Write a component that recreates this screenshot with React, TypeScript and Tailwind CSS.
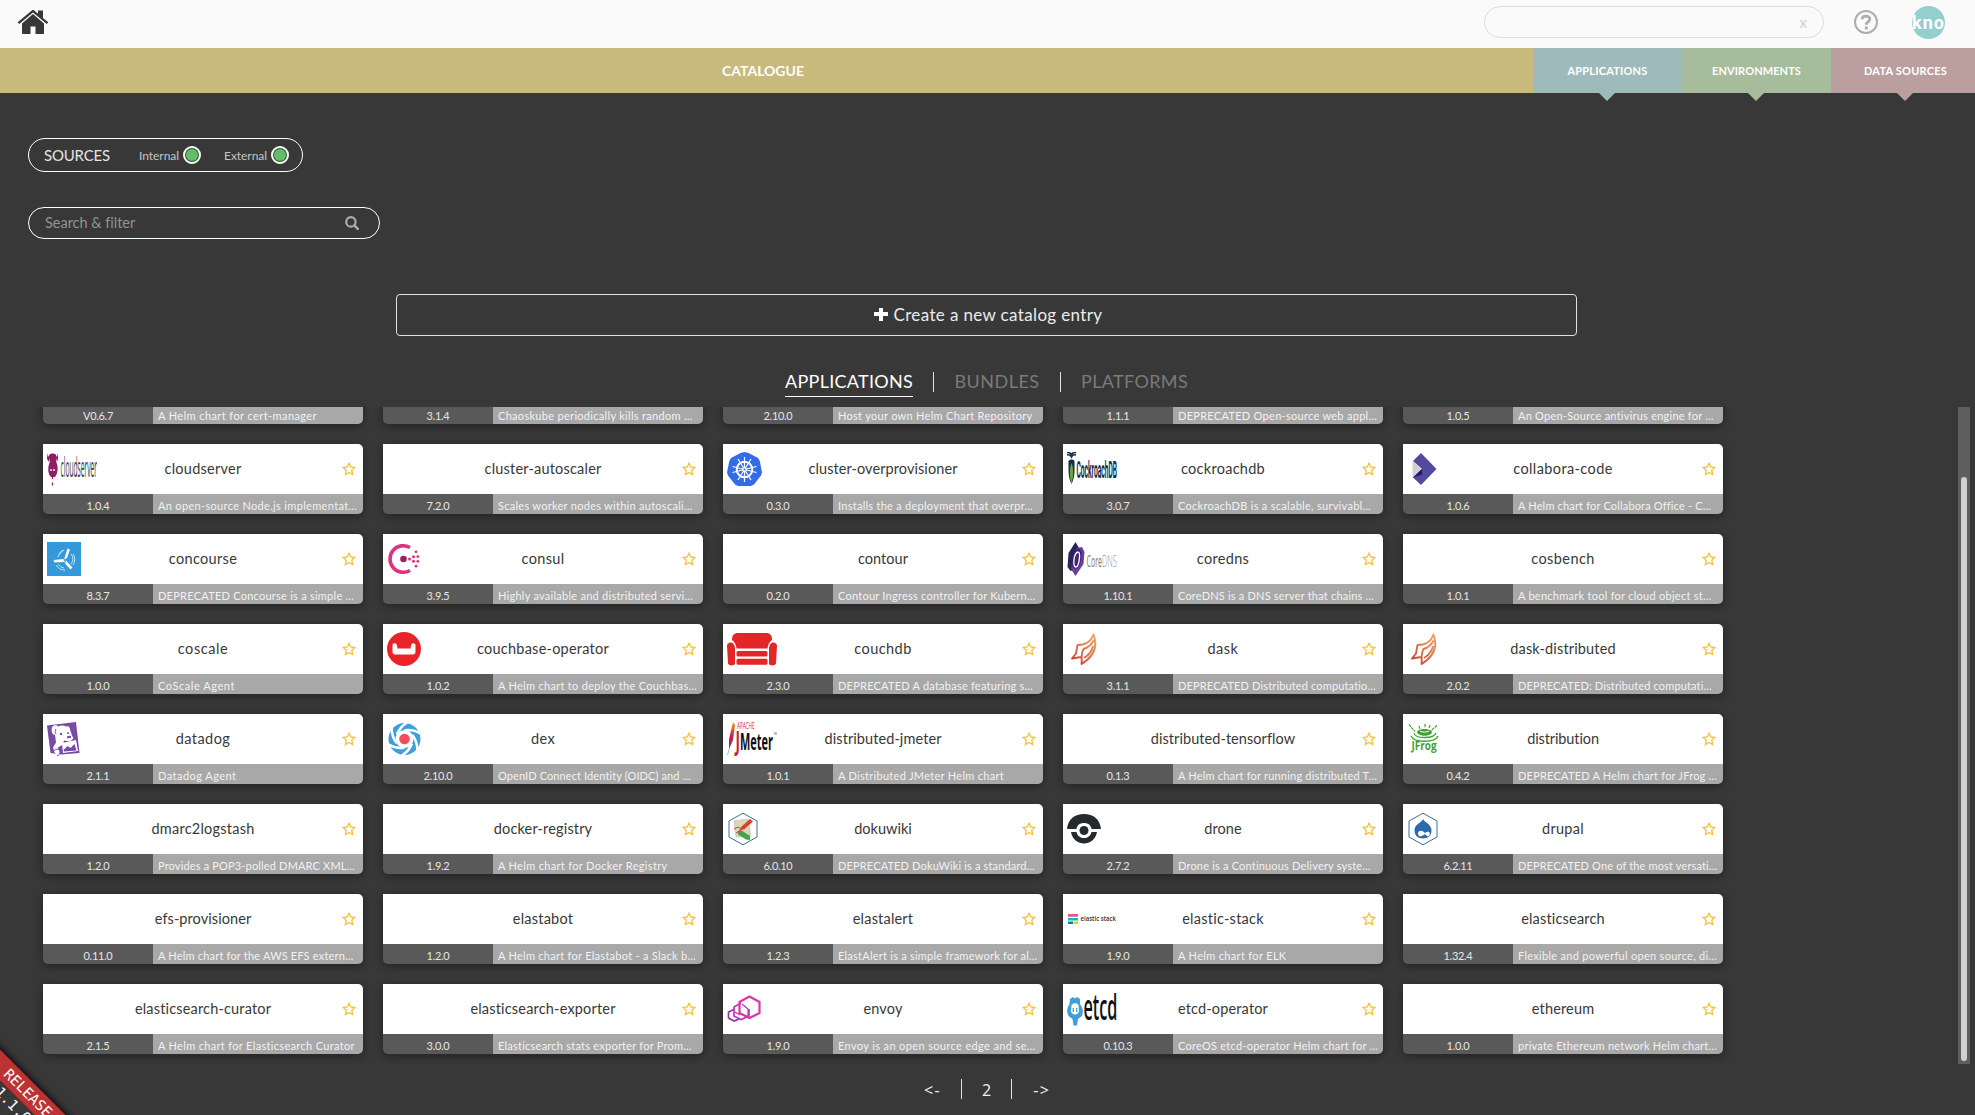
import { useLayoutEffect, useRef, useState } from 'react';
import type { ReactNode } from 'react';

/** Text whose tracking is adjusted so that the line takes the given width. */
function Fit({ text, w, className = '' }: { text: string; w: number; className?: string }) {
  const ref = useRef<HTMLSpanElement>(null);
  const [spacing, setSpacing] = useState(0);
  useLayoutEffect(() => {
    if (ref.current) {
      const natural = ref.current.getBoundingClientRect().width;
      setSpacing((w - natural) / text.length);
    }
  }, [text, w]);
  return (
    <span ref={ref} className={`inline-block whitespace-pre ${className}`} style={{ letterSpacing: spacing }}>
      {text}
    </span>
  );
}

const logos: Record<string, ReactNode> = {
  cloudserver: (
    <svg className="h-[34px] w-[50px]" viewBox="0 0 50 34">
      <path d="M0 1v6l2 3 1-4 1-4h4l1 4 1 4 1-3V1l-1 4-2-3H3L1 5z" fill="#8e1f63" />
      <path d="M2.500 3c1-2 5.500-2 6.500 0v6l1.500 5c.6 6-1 9-2.500 11H4C2 23 .8 20 1.500 14L3 9z" fill="#8e1f63" />
      <circle cx="4" cy="18" r=".9" fill="#fff" /><circle cx="7" cy="18" r=".9" fill="#fff" />
      <path d="M5.500 24v3M5.500 30.500v3" stroke="#8e1f63" strokeWidth="1.300" />
      <text x="13.500" y="24.500" fontFamily="Open Sans" fontSize="28" textLength="36.500" lengthAdjust="spacingAndGlyphs" fill="#2f3b50">cloudserver</text>
    </svg>
  ),
  'cluster-overprovisioner': (
    <svg className="h-[34px] w-[35px]" viewBox="0 0 35 34">
      <path d="M17.500 0l4 1 9.500 5 1.800 3L35 20.500l-1 3-7 9-3 1.500H11l-3-1.500-7-9-1-3L2.300 9 4 6l9.500-5z" fill="#326de6" />
      <g stroke="#fff" fill="none" strokeWidth="1.500">
        <circle cx="17.500" cy="17.500" r="7.800" strokeWidth="1.900" />
        <path d="M17.500 5v25M5.500 14.500l24 6M29.500 14.500l-24 6M11 7l13 21M24 7L11 28" strokeWidth="1.200" />
      </g>
      <circle cx="17.500" cy="17.500" r="2.200" fill="#fff" /><circle cx="17.500" cy="17.500" r="1" fill="#326de6" />
    </svg>
  ),
  cockroachdb: (
    <svg className="h-[34px] w-[50px]" viewBox="0 0 50 34">
      <path d="M0 .8c2.500-.8 4 .5 4.500 2.500C5 1.300 6.500 0 9 .8M0 3c2-.8 3.500 0 4.500 2C5.500 3 7 2.200 9 3" stroke="#122c4a" strokeWidth="1.500" fill="none" />
      <path d="M1.500 9c1.500-2 4.500-2 6 0v9c0 6-1 10-3 14-2-4-3-8-3-14z" fill="#122c4a" />
      <path d="M4.500 11c2.500 6 2 14 0 21-2-7-2.500-15 0-21" fill="#5ea93c" />
      <text x="9.500" y="25.500" fontFamily="Roboto" fontWeight="700" fontSize="23" textLength="40.500" lengthAdjust="spacingAndGlyphs" fill="#122c4a">CockroachDB</text>
    </svg>
  ),
  'collabora-code': (
    <svg className="h-[34px] w-[34px]" viewBox="0 0 34 34">
      <path d="M5.500 9v17l9-8.500z" fill="#d0d0d0" />
      <path d="M14 1l15.500 16L14 33l-8-7.500 9-8.500-9-8z" fill="#514a9d" />
      <path d="M6 25.500l9-8.500v5.500z" fill="#2b0f75" />
    </svg>
  ),
  concourse: (
    <svg className="h-[34px] w-[34px]" viewBox="0 0 34 34">
      <rect width="34" height="34" fill="#3498db" />
      <path d="M20.500 6.500l2.500 1-3 8.500-3 1.500zM6.500 18l10-1 1.500 3-10.500.500zM19 18.500l6.500 7-2 2-5.500-6z" fill="#fff" />
      <g stroke="#d4ebfa" fill="none" strokeWidth=".9"><path d="M13 12a8 8 0 014-4M11 15a10 10 0 015-7M11 22a8 8 0 006 4M9 23a10 10 0 009 5M24 12a8 8 0 010 10M26 12a10 10 0 010 11" /></g>
    </svg>
  ),
  consul: (
    <svg className="h-[34px] w-[34px]" viewBox="0 0 34 34">
      <path d="M23 5.500A13.300 13.300 0 1023 28.500" fill="none" stroke="#e0317e" strokeWidth="3.600" />
      <circle cx="16.500" cy="17" r="3.300" fill="#96215c" />
      <g fill="#e0317e"><circle cx="22.500" cy="17" r="1.500" /><circle cx="26.500" cy="14.700" r="1.500" /><circle cx="26.500" cy="19.300" r="1.500" /><circle cx="30.800" cy="14.700" r="1.400" /><circle cx="30.800" cy="19.300" r="1.400" /><circle cx="29" cy="9.800" r="1.400" /><circle cx="29" cy="24.200" r="1.400" /></g>
    </svg>
  ),
  coredns: (
    <svg className="h-[34px] w-[50px]" viewBox="0 0 50 34">
      <path d="M8.500 0l4 7-3 20-6 2-3-4 1-14z" fill="#2b2256" />
      <path d="M9 6l6-1 2.500 5-1 12-8 12-4.500-7z" fill="#6a3f9c" />
      <path d="M9 6l4 1 2 4-2 12-5 4-4-3z" fill="#43257c" />
      <path d="M11.500 10c-5 0-6 15-3 15 4 0 5-14 3-15" stroke="#fff" strokeWidth="1.300" fill="none" />
      <text x="19.500" y="24.500" fontFamily="Open Sans" fontSize="16.500" textLength="15.500" lengthAdjust="spacingAndGlyphs" fill="#7a7a7a">Core</text>
      <text x="35" y="24.500" fontFamily="Open Sans" fontWeight="300" fontSize="16.500" textLength="15" lengthAdjust="spacingAndGlyphs" fill="#9a9a9a">DNS</text>
    </svg>
  ),
  'couchbase-operator': (
    <svg className="h-[34px] w-[34px]" viewBox="0 0 34 34">
      <circle cx="17" cy="17" r="17" fill="#ea2328" />
      <path d="M5.500 13.500c0-3 4-3 4.500 0l.5 3h13l.5-3c.5-3 4.500-3 4.500 0V20c0 1.500-1 2.500-2.500 2.500H8c-1.500 0-2.500-1-2.500-2.500z" fill="#fff" />
    </svg>
  ),
  couchdb: (
    <svg className="h-[34px] w-[50px]" viewBox="0 0 50 34">
      <g fill="#e42528">
        <path d="M5 8c0-5 2-7 6-7h28c4 0 6 2 6 7-3 2-4 5-4.500 8.500h-31C9 13 8 10 5 8z" />
        <rect x="9.500" y="19" width="31" height="5.500" rx="1.500" /><rect x="9.500" y="26.700" width="31" height="6" rx="1.500" />
        <path d="M0 14c0-4 7-6 8 2v16c-1 2-7 2-7-1zM50 14c0-4-7-6-8 2v16c1 2 7 2 7-1z" />
      </g>
    </svg>
  ),
  dask: (
    <svg className="h-[34px] w-[34px]" viewBox="0 0 34 34">
      <defs><linearGradient id="dask" x1="0" y1="1" x2=".8" y2="0"><stop stopColor="#c83c2e" /><stop offset="1" stopColor="#f0a060" /></linearGradient></defs>
      <path d="M14 25l-9 1.500 4-5 1.500-8.500C18 13 24 10 26.500 2.500c5 13-1.500 23-12 29.500 1-5-1.500-9 2-15C23 15 25.500 11 27 8M17 26c5-3 8-7 9-12" fill="none" stroke="url(#dask)" strokeWidth="1.900" strokeLinejoin="round" />
    </svg>
  ),
  datadog: (
    <svg className="h-[34px] w-[34px]" viewBox="0 0 34 34">
      <path d="M0 3.500L29 0l3.500 31-18 1.500L3.500 31z" fill="#774aa4" />
      <path d="M5 5c2-2.500 5-2 6-.5 2.500-1.500 6-1.500 8 0 2-1 4 0 4 3l2 6 1.500 3-3.500 3-6-1-1 4-5 3 1 5-4 1-2-6 3-5-1-8c-3 1-4-4-3-7.500z" fill="#fff" />
      <path d="M15 21l14-3 2 11-15 2z" fill="#fff" />
      <path d="M16.500 28l4-4 3 2 4-4 2 6.500-12.500 1z" fill="#774aa4" />
      <path d="M9 7c-1 2-1 3 0 5" stroke="#774aa4" fill="none" />
      <circle cx="14" cy="12" r="1.200" fill="#774aa4" /><circle cx="21" cy="11" r="1" fill="#774aa4" /><path d="M20 15.500l4-.8" stroke="#774aa4" strokeWidth="2.200" />
      <path d="M7 29c2-3 6-2 6 1 0 2-1 3.500-3 3.500" fill="#fff" stroke="#774aa4" />
    </svg>
  ),
  dex: (
    <svg className="h-[34px] w-[34px]" viewBox="0 0 34 34">
      <circle cx="17.500" cy="17" r="12.500" fill="none" stroke="#3f9fda" strokeWidth="7" />
      <g stroke="#fff" strokeWidth="2.600">
        {[0, 60, 120, 180, 240, 300].map((a) => <path key={a} transform={`rotate(${a} 17.500 17)`} d="M10 12.500C12 7 16 3 21 0" fill="none" />)}
      </g>
      <circle cx="17.500" cy="17" r="5.300" fill="#f24d5f" />
    </svg>
  ),
  'distributed-jmeter': (
    <svg className="h-[34px] w-[50px]" viewBox="0 0 50 34">
      <defs><linearGradient id="quill" x1="0" y1="0" x2="0" y2="1"><stop stopColor="#f6a21c" /><stop offset=".5" stopColor="#cf2640" /><stop offset="1" stopColor="#6b2d84" /></linearGradient></defs>
      <path d="M6 0l2 3-2 15-4 9 0-10z" fill="url(#quill)" /><path d="M2.500 26L.5 33" stroke="#999" strokeWidth=".7" />
      <text x="10" y="7" fontFamily="Open Sans" fontSize="9" textLength="17.500" lengthAdjust="spacingAndGlyphs" fill="#cf2640">APACHE</text>
      <text x="8.500" y="28" fontFamily="Open Sans" fontWeight="700" fontSize="26" textLength="4.500" lengthAdjust="spacingAndGlyphs" fill="#cb2138">J</text>
      <text x="13" y="28" fontFamily="Open Sans" fontWeight="700" fontSize="24" textLength="33" lengthAdjust="spacingAndGlyphs" fill="#111">Meter</text>
      <text x="46.500" y="13" fontFamily="Open Sans" fontSize="4" textLength="3.500" lengthAdjust="spacingAndGlyphs" fill="#444">TM</text>
    </svg>
  ),
  distribution: (
    <svg className="h-[34px] w-[34px]" viewBox="0 0 34 34">
      <g stroke="#43a233" fill="none">
        <path d="M2 2.500l6 7M30 3.500l-6 5M12 4l1 3M18 2v4M23 3l-1 3" strokeWidth="1.200" strokeDasharray="3 .7" />
        <path d="M10 10c1-4 14-4 15 0-1 5-14 5-15 0z" fill="#43a233" stroke="none" />
        <path d="M13 9c2 1.500 7 1.500 9 0" stroke="#fff" />
        <path d="M7 11c1 6 20 6 22 0M4 14c3 7 24 7 27 0" strokeWidth="1.300" />
      </g>
      <text x="4.500" y="28" fontFamily="Open Sans" fontWeight="700" fontSize="13" textLength="25" lengthAdjust="spacingAndGlyphs" fill="#43a233">JFrog</text>
    </svg>
  ),
  dokuwiki: (
    <svg className="h-[34px] w-[34px]" viewBox="0 0 34 34">
      <path d="M16 1.200l14 7.800v16l-14 7.800L2 25V9z" fill="#fff" stroke="#3c6e96" strokeWidth="1" />
      <path d="M7 9l14-2 3 17-15 1z" fill="#ddd6b8" stroke="#b5ae90" strokeWidth=".5" />
      <path d="M14 15l9-8 3 2.500-9 8-4 .5z" fill="#d8432e" /><path d="M11 19l3-1 9 6v4l-4-.5-8-5z" fill="#43a548" />
      <path d="M7 17l4-2 3 2M9 21l5-3" stroke="#c35" fill="none" />
    </svg>
  ),
  drone: (
    <svg className="h-[34px] w-[34px]" viewBox="0 0 34 34">
      <path d="M0 17C1 7 8 2 17 2s16 5 17 15H24.500C24 13 21 11 17 11s-7 2-7.500 6zM4 20h5.500c1 4 4 6 7.500 6s6.500-2 7.500-6H30c-1 7-7 11.500-13 11.500S5 27 4 20z" fill="#262a2c" />
      <circle cx="17" cy="18.500" r="4.500" fill="#262a2c" />
    </svg>
  ),
  drupal: (
    <svg className="h-[34px] w-[34px]" viewBox="0 0 34 34">
      <path d="M16 1.200l14 7.800v16l-14 7.800L2 25V9z" fill="#fff" stroke="#3c6e96" strokeWidth="1" />
      <path d="M16 7c1 3 8.500 5 8.500 11.500 0 5-3.500 8-8.500 8s-8.500-3-8.500-8C7.500 12 14.500 11 16 7z" fill="#2a6bb0" />
      <path d="M11 22c0-4 4-4 7-1 4-3 6 0 4 3-2 1-3-1-4-2-2 2-6 4-7 0z" fill="#fff" />
    </svg>
  ),
  'elastic-stack': (
    <svg className="h-[34px] w-[50px]" viewBox="0 0 50 34">
      <path d="M1 12h10v2.800H1z" fill="#f04e98" /><path d="M1 16h10v2.500H1z" fill="#00bfb3" /><path d="M1 19.500h5V22H1z" fill="#0b77cc" /><path d="M6.500 19.500H11V22H6.500z" fill="#fec514" />
      <text x="13.500" y="18.800" fontFamily="Open Sans" fontWeight="600" fontSize="6.500" textLength="35.500" lengthAdjust="spacingAndGlyphs" fill="#333">elastic stack</text>
    </svg>
  ),
  envoy: (
    <svg className="h-[34px] w-[34px]" viewBox="0 0 34 34" fill="none">
      <path d="M8 17l-6.500 3v6L7 29l5-2" stroke="#9b2fae" strokeWidth="1.700" />
      <path d="M14 11l-7 4v9l7 3.500 8-3.500v-7" stroke="#b03bc0" strokeWidth="1.700" />
      <path d="M22.500 4.500l10 5.500v11l-10 5-10-5V10z" stroke="#e0359c" strokeWidth="2.200" />
      <path d="M15 12l6 5v7M8 20l5 3" stroke="#b03bc0" strokeWidth="1.300" />
    </svg>
  ),
  'etcd-operator': (
    <svg className="h-[34px] w-[50px]" viewBox="0 0 50 34">
      <path d="M3 7l3-2 2 1.500L10 5l3 2 0 5c4 6 3 8 2 12l-4 3-1 6.500H6.500L5.500 27l-4-3C0 20-1 18 2.500 12z" fill="#419eda" />
      <path d="M4.500 13c2-2.500 5.500-2.500 7 0l.5 6c-.5 4.500-7.500 4.500-8 0z" fill="#fff" />
      <path d="M6.300 16v4M9.700 16v4" stroke="#419eda" strokeWidth="1.300" />
      <text x="16.500" y="28" fontFamily="Open Sans" fontWeight="600" fontSize="36" textLength="34" lengthAdjust="spacingAndGlyphs" fill="#111">etcd</text>
    </svg>
  ),
};
logos['dask-distributed'] = logos.dask;

type Entry = [name: string, nameWidth: number, version: string, description: string, descriptionWidth: number];

/** Cards of the row that is scrolled out of view but for its bottom edge. */
const scrolledEntries: Entry[] = [
  ['', 0, 'V0.6.7', 'A Helm chart for cert-manager', 159],
  ['', 0, '3.1.4', 'Chaoskube periodically kills random …', 194.5],
  ['', 0, '2.10.0', 'Host your own Helm Chart Repository', 194.5],
  ['', 0, '1.1.1', 'DEPRECATED Open-source web appl…', 199],
  ['', 0, '1.0.5', 'An Open-Source antivirus engine for …', 196],
];

const entries: Entry[] = [
  ['cloudserver', 77, '1.0.4', 'An open-source Node.js implementat…', 199],
  ['cluster-autoscaler', 117, '7.2.0', 'Scales worker nodes within autoscali…', 194.5],
  ['cluster-overprovisioner', 149, '0.3.0', 'Installs the a deployment that overpr…', 195],
  ['cockroachdb', 84, '3.0.7', 'CockroachDB is a scalable, survivabl…', 193],
  ['collabora-code', 99.5, '1.0.6', 'A Helm chart for Collabora Office - C…', 192.5],
  ['concourse', 68.5, '8.3.7', 'DEPRECATED Concourse is a simple …', 196],
  ['consul', 43, '3.9.5', 'Highly available and distributed servi…', 195],
  ['contour', 50, '0.2.0', 'Contour Ingress controller for Kubern…', 197.5],
  ['coredns', 52.5, '1.10.1', 'CoreDNS is a DNS server that chains …', 196],
  ['cosbench', 63.5, '1.0.1', 'A benchmark tool for cloud object st…', 193.5],
  ['coscale', 50.5, '1.0.0', 'CoScale Agent', 77],
  ['couchbase-operator', 132, '1.0.2', 'A Helm chart to deploy the Couchbas…', 199],
  ['couchdb', 57.5, '2.3.0', 'DEPRECATED A database featuring s…', 195],
  ['dask', 31, '3.1.1', 'DEPRECATED Distributed computatio…', 198],
  ['dask-distributed', 105.5, '2.0.2', 'DEPRECATED: Distributed computati…', 194],
  ['datadog', 54.5, '2.1.1', 'Datadog Agent', 78.5],
  ['dex', 24, '2.10.0', 'OpenID Connect Identity (OIDC) and …', 193],
  ['distributed-jmeter', 117, '1.0.1', 'A Distributed JMeter Helm chart', 166],
  ['distributed-tensorflow', 144.5, '0.1.3', 'A Helm chart for running distributed T…', 199],
  ['distribution', 72, '0.4.2', 'DEPRECATED A Helm chart for JFrog …', 199],
  ['dmarc2logstash', 103, '1.2.0', 'Provides a POP3-polled DMARC XML…', 197],
  ['docker-registry', 98.5, '1.9.2', 'A Helm chart for Docker Registry', 169.5],
  ['dokuwiki', 57.5, '6.0.10', 'DEPRECATED DokuWiki is a standard…', 197],
  ['drone', 37.5, '2.7.2', 'Drone is a Continuous Delivery syste…', 193],
  ['drupal', 42, '6.2.11', 'DEPRECATED One of the most versati…', 199.5],
  ['efs-provisioner', 96.5, '0.11.0', 'A Helm chart for the AWS EFS extern…', 195.5],
  ['elastabot', 60.5, '1.2.0', 'A Helm chart for Elastabot - a Slack b…', 198],
  ['elastalert', 60.5, '1.2.3', 'ElastAlert is a simple framework for al…', 199.5],
  ['elastic-stack', 82, '1.9.0', 'A Helm chart for ELK', 108.5],
  ['elasticsearch', 84, '1.32.4', 'Flexible and powerful open source, di…', 199],
  ['elasticsearch-curator', 136.5, '2.1.5', 'A Helm chart for Elasticsearch Curator', 197],
  ['elasticsearch-exporter', 145.5, '3.0.0', 'Elasticsearch stats exporter for Prom…', 194],
  ['envoy', 39, '1.9.0', 'Envoy is an open source edge and se…', 197.5],
  ['etcd-operator', 90, '0.10.3', 'CoreOS etcd-operator Helm chart for …', 200],
  ['ethereum', 62.5, '1.0.0', 'private Ethereum network Helm chart…', 199],
];

function Star() {
  return (
    <svg className="absolute top-[18px] right-[7px] h-[14px] w-[14px]" viewBox="0 0 14 14" fill="none" stroke="#fbc02d" strokeWidth="1.300">
      <path d="M7 1.300l1.700 3.700 4.100.5-3 2.800.8 4.200L7 10.500l-3.600 2 .8-4.200-3-2.800 4.100-.5z" />
    </svg>
  );
}

function Card({ entry: [name, nameWidth, version, description, descriptionWidth] }: { entry: Entry }) {
  return (
    <div className="h-[70px] overflow-hidden rounded-[5px] rounded-tl-none shadow-[0_2px_10px_rgba(0,0,0,0.4)]">
      <div className="relative flex h-[50px] items-center justify-center bg-white text-[14.500px] text-[#383838]">
        {name && (
          <>
            <div className="absolute top-2 left-1">{logos[name]}</div>
            <Fit text={name} w={nameWidth} />
            <Star />
          </>
        )}
      </div>
      <div className="flex h-5 text-[11px] leading-4">
        <div className="w-[110px] bg-[#595959] pt-1 text-center tracking-[-0.3px] text-[#e6e6e6]">{version}</div>
        <div className="flex-1 bg-[#a8a8a8] pt-1 pl-[5px] text-[#f2f2f2]">
          <Fit text={description} w={descriptionWidth} />
        </div>
      </div>
    </div>
  );
}

function NavTab({ label, w, color, arrow }: { label: string; w: number; color: string; arrow: string }) {
  return (
    <div className={`relative flex h-[45px] w-[149px] shrink-0 items-center justify-center pt-[2px] text-[11px] font-bold text-white ${color}`}>
      <Fit text={label} w={w} />
      <div className={`absolute top-full left-1/2 -ml-[9px] border-x-8 border-t-8 border-x-transparent ${arrow}`} />
    </div>
  );
}

function Toggle() {
  return <div className="h-[18px] w-[18px] shrink-0 rounded-full border-2 border-white bg-[#1b5e20] p-px"><div className="h-full w-full rounded-full bg-[#66bb6a]" /></div>;
}

export default function App() {
  return (
    <div className="relative flex h-[1115px] w-[1975px] flex-col overflow-hidden bg-[#383838] font-['Lato',sans-serif]">
      <header className="flex h-12 shrink-0 items-center bg-[#fafafa] pl-[17px]">
        <svg className="mt-[-4px] h-[26px] w-[32px]" viewBox="0 0 32 26" fill="#383838">
          <path d="M5 14.500L16 5l11 9.500V24c0 .6-.4 1-1 1h-7.500v-7.500h-5V25H6c-.6 0-1-.4-1-1z" />
          <path d="M.7 13.300L14.800 1.500c.7-.6 1.700-.6 2.400 0L21 4.700V1.500h5V9l5.300 4.300-1.500 1.700L16 3.500 2.200 15z" />
        </svg>
        <div className="mt-[-4px] ml-[1435px] flex h-8 w-[340px] items-center justify-end rounded-2xl border border-[#dcdcdc] pr-4 text-[15px] text-[#d0d0d0]">x</div>
        <svg className="mt-[-4px] ml-[30px] h-6 w-6" viewBox="0 0 24 24" fill="none" stroke="#adadad">
          <circle cx="12" cy="12" r="11" strokeWidth="2" />
          <path d="M8.200 9.200c.2-4.200 7.700-4.200 7.600 0 0 2.400-3.400 2.600-3.500 5.600" strokeWidth="2.800" />
          <path d="M10.800 16.500h3v3h-3z" fill="#adadad" stroke="none" />
        </svg>
        <div className="mt-[-3px] ml-[34px] flex h-[33px] w-[33px] items-center justify-center overflow-hidden rounded-full bg-[#93cfce] font-['Roboto'] text-[18px] font-bold text-white">
          <Fit text="kno" w={33} />
        </div>
      </header>
      <nav className="flex h-[45px] shrink-0 bg-[#c8ba7c]">
        <div className="flex w-[1533px] shrink-0 items-center justify-center pr-[7px] text-[14px] font-bold text-white">
          <Fit text="CATALOGUE" w={82} />
        </div>
        <NavTab label="APPLICATIONS" w={80} color="bg-[#9fbaba]" arrow="border-t-[#9fbaba]" />
        <NavTab label="ENVIRONMENTS" w={89} color="bg-[#a7bc9a]" arrow="border-t-[#a7bc9a]" />
        <NavTab label="DATA SOURCES" w={83} color="bg-[#bb9f9e]" arrow="border-t-[#bb9f9e]" />
      </nav>
      <div className="mt-[45px] ml-7 flex h-[34px] w-[275px] shrink-0 items-center rounded-[17px] border border-white pl-[15px] text-[#e4e4e4]">
        <Fit text="SOURCES" w={66} className="text-[15px]" />
        <div className="mt-0.5 ml-[29px] w-[44px] text-[12px] text-[#c4c4c4]"><Fit text="Internal" w={40} /></div>
        <Toggle />
        <div className="mt-0.5 ml-[23px] w-[47px] text-[12px] text-[#c4c4c4]"><Fit text="External" w={43} /></div>
        <Toggle />
      </div>
      <div className="mt-[35px] ml-7 flex h-8 w-[352px] shrink-0 items-center justify-between rounded-2xl border border-white pr-5 pl-4 text-[14.500px] text-[#929292]">
        <Fit text="Search &amp; filter" w={90} />
        <svg className="h-[14px] w-[14px]" viewBox="0 0 14 14" fill="none" stroke="#adadad"><circle cx="5.900" cy="5.900" r="4.700" strokeWidth="2.200" /><path d="M9.300 9.300l3.500 3.500" strokeWidth="2.500" strokeLinecap="round" /></svg>
      </div>
      <div className="mt-[55px] ml-[396px] flex h-[42px] w-[1181px] shrink-0 items-center justify-center gap-[6px] rounded-[4px] border border-[#e0e0e0] pl-[3px] text-[17px] text-[#ececec]">
        <svg className="mt-[-2px] h-[14px] w-[14px]" viewBox="0 0 14 14"><path d="M5 1h4v4h5v4H9v5H5V9H0V5h5z" fill="#fff" /></svg>
        <Fit text="Create a new catalog entry" w={209} />
      </div>
      <div className="mt-[34px] ml-[785px] flex h-[37px] shrink-0 items-start text-[18px] leading-[23px] text-[#7a7a7a]">
        <div className="h-[27px] border-b border-white text-white"><Fit text="APPLICATIONS" w={128} /></div>
        <div className="mt-[2px] ml-5 h-5 w-px bg-[#e0e0e0]" />
        <Fit text="BUNDLES" w={85} className="ml-[20.500px]" />
        <div className="mt-[2px] ml-[20.500px] h-5 w-px bg-[#e0e0e0]" />
        <Fit text="PLATFORMS" w={107} className="ml-[20px]" />
      </div>
      <main className="flex h-[657px] shrink-0 overflow-hidden">
        <div className="mt-[-53px] grid h-max w-[1958px] shrink-0 grid-cols-[repeat(5,320px)] gap-5 pl-[43px]">
          {[...scrolledEntries, ...entries].map((e) => <Card key={e[3]} entry={e} />)}
        </div>
        <div className="flex h-full w-3 shrink-0 flex-col items-center bg-[#5e5e5e] pt-[70px]">
          <div className="h-[584px] w-[6px] rounded-[3px] bg-[#d0d0d2]" />
        </div>
      </main>
      <footer className="mt-[15px] ml-[924px] flex h-5 shrink-0 items-center font-['Open_Sans'] text-[16px] leading-5 text-[#f0f0f0]">
        <Fit text="&lt;-" w={17} className="mt-[2px]" /><div className="ml-[20px] h-5 w-px bg-[#e0e0e0]" />
        <span className="mt-[2px] ml-[20px]">2</span><div className="ml-[20px] h-5 w-px bg-[#e0e0e0]" />
        <Fit text="-&gt;" w={17} className="mt-[2px] ml-[21px]" />
      </footer>
      <div className="absolute top-[1093px] left-[28px] h-0 w-0 font-['DejaVu_Sans_Mono'] text-[14.500px] leading-[22px] text-white">
        <div className="absolute top-[-11px] left-[-100px] w-[200px] origin-[100px_11px] rotate-45 text-center">
          <div className="bg-[#bb3333] shadow-[0_0_7px_2px_rgba(0,0,0,0.8)]">RELEASE</div>
          <div className="bg-[#383838] pr-1 leading-[16px]">1.1.0</div>
        </div>
      </div>
    </div>
  );
}
